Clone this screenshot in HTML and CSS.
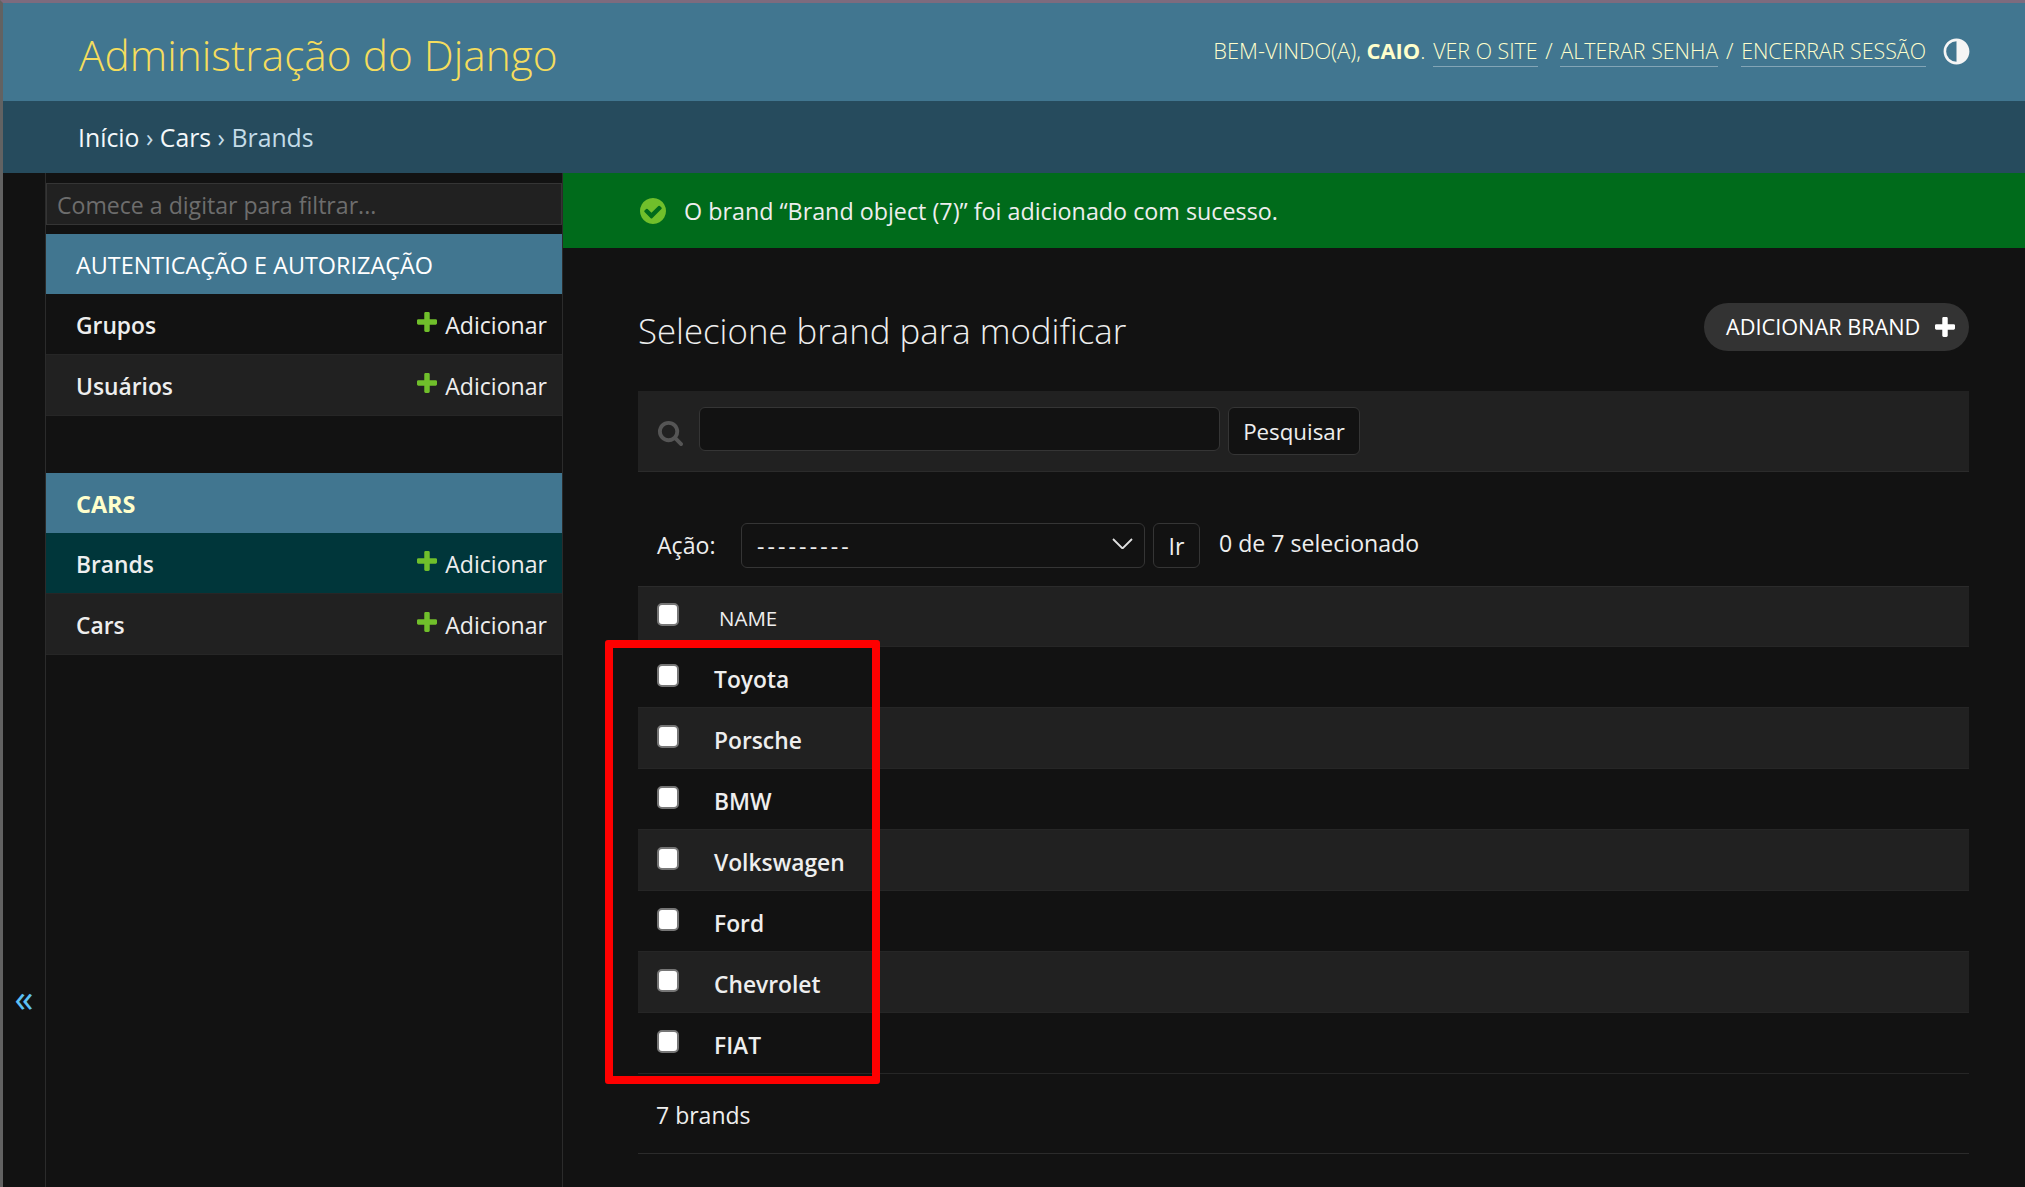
FILE: index.html
```html
<!DOCTYPE html>
<html lang="pt-BR">
<head>
<meta charset="utf-8">
<title>Selecione brand para modificar | Administração do Django</title>
<link rel="stylesheet" href="styles.css">
</head>
<body>
<div class="page">
  <header class="header">
    <h1 class="branding">Administração do Django</h1>
    <div class="tools">
      <div class="user-tools">Bem-vindo(a), <strong>Caio</strong>. <a href="#">Ver o site</a> / <a href="#">Alterar senha</a> / <a href="#">Encerrar sessão</a></div>
      <svg class="theme-icon" viewBox="0 0 24 24" aria-hidden="true"><path fill="currentColor" d="M12 22C6.477 22 2 17.523 2 12S6.477 2 12 2s10 4.477 10 10-4.477 10-10 10zm0-2V4a8 8 0 1 0 0 16z"/></svg>
    </div>
  </header>
  <nav class="breadcrumbs"><a href="#">Início</a> › <a href="#">Cars</a> › Brands</nav>
  <div class="main">
    <div class="toggle-col"><span class="toggle">«</span></div>
    <aside class="sidebar">
      <input class="nav-filter" type="text" placeholder="Comece a digitar para filtrar...">
      <section class="app">
        <div class="caption">Autenticação e Autorização</div>
        <div class="nav-row">
          <a href="#" class="model">Grupos</a>
          <a href="#" class="addlink"><svg class="plus" viewBox="192 192 1408 1408"><path d="M1600 796v192q0 40-28 68t-68 28h-416v416q0 40-28 68t-68 28h-192q-40 0-68-28t-28-68v-416h-416q-40 0-68-28t-28-68v-192q0-40 28-68t68-28h416v-416q0-40 28-68t68-28h192q40 0 68 28t28 68v416h416q40 0 68 28t28 68z"/></svg>Adicionar</a>
        </div>
        <div class="nav-row alt">
          <a href="#" class="model">Usuários</a>
          <a href="#" class="addlink"><svg class="plus" viewBox="192 192 1408 1408"><path d="M1600 796v192q0 40-28 68t-68 28h-416v416q0 40-28 68t-68 28h-192q-40 0-68-28t-28-68v-416h-416q-40 0-68-28t-28-68v-192q0-40 28-68t68-28h416v-416q0-40 28-68t68-28h192q40 0 68 28t28 68v416h416q40 0 68 28t28 68z"/></svg>Adicionar</a>
        </div>
      </section>
      <section class="app app-cars">
        <div class="caption current">Cars</div>
        <div class="nav-row selected">
          <a href="#" class="model">Brands</a>
          <a href="#" class="addlink"><svg class="plus" viewBox="192 192 1408 1408"><path d="M1600 796v192q0 40-28 68t-68 28h-416v416q0 40-28 68t-68 28h-192q-40 0-68-28t-28-68v-416h-416q-40 0-68-28t-28-68v-192q0-40 28-68t68-28h416v-416q0-40 28-68t68-28h192q40 0 68 28t28 68v416h416q40 0 68 28t28 68z"/></svg>Adicionar</a>
        </div>
        <div class="nav-row alt">
          <a href="#" class="model">Cars</a>
          <a href="#" class="addlink"><svg class="plus" viewBox="192 192 1408 1408"><path d="M1600 796v192q0 40-28 68t-68 28h-416v416q0 40-28 68t-68 28h-192q-40 0-68-28t-28-68v-416h-416q-40 0-68-28t-28-68v-192q0-40 28-68t68-28h416v-416q0-40 28-68t68-28h192q40 0 68 28t28 68v416h416q40 0 68 28t28 68z"/></svg>Adicionar</a>
        </div>
      </section>
    </aside>
    <main class="content">
      <div class="message">
        <svg class="yes" viewBox="128 128 1536 1536"><path d="M1412 734q0-28-18-46l-91-90q-19-19-45-19t-45 19l-408 407-226-226q-19-19-45-19t-45 19l-91 90q-18 18-18 46 0 27 18 45l362 362q19 19 45 19 27 0 46-19l543-543q18-18 18-45zm252 162q0 209-103 385.5t-279.500 279.500-385.500 103-385.500-103-279.500-279.500-103-385.500 103-385.500 279.500-279.500 385.500-103 385.500 103 279.500 279.500 103 385.500z"/></svg>
        <span>O brand “Brand object (7)” foi adicionado com sucesso.</span>
      </div>
      <div class="body">
        <div class="title-row">
          <h2 class="title">Selecione brand para modificar</h2>
          <a href="#" class="add-btn">Adicionar brand<svg class="plus-w" viewBox="192 192 1408 1408"><path d="M1600 796v192q0 40-28 68t-68 28h-416v416q0 40-28 68t-68 28h-192q-40 0-68-28t-28-68v-416h-416q-40 0-68-28t-28-68v-192q0-40 28-68t68-28h416v-416q0-40 28-68t68-28h192q40 0 68 28t28 68v416h416q40 0 68 28t28 68z"/></svg></a>
        </div>
        <form class="toolbar">
          <svg class="search-icon" viewBox="0 0 1792 1792"><path d="M1216 832q0-185-131.500-316.500t-316.500-131.500-316.500 131.500-131.500 316.500 131.500 316.500 316.500 131.500 316.500-131.500 131.500-316.500zm512 832q0 52-38 90t-90 38q-54 0-90-38l-343-342q-179 124-399 124-143 0-273.500-55.500t-225-150-150-225-55.500-273.500 55.500-273.500 150-225 225-150 273.500-55.500 273.500 55.500 225 150 150 225 55.500 273.500q0 220-124 399l343 343q37 37 37 90z"/></svg>
          <input class="search-input" type="text">
          <button class="search-btn" type="button">Pesquisar</button>
        </form>
        <div class="actions">
          <span class="action-label">Ação:</span>
          <div class="select"><span class="dashes">---------</span><svg class="chevron" viewBox="0 0 21 11"><path d="M1 1l9.500 9.500L20 1" fill="none" stroke="currentColor" stroke-width="1.800"/></svg></div>
          <button class="go-btn" type="button">Ir</button>
          <span class="counter">0 de 7 selecionado</span>
        </div>
        <div class="result">
          <div class="red-box"></div>
          <div class="row head"><input class="check" type="checkbox"><span class="col-name">Name</span></div>
          <div class="row"><input class="check" type="checkbox"><a href="#" class="name">Toyota</a></div>
          <div class="row alt"><input class="check" type="checkbox"><a href="#" class="name">Porsche</a></div>
          <div class="row"><input class="check" type="checkbox"><a href="#" class="name">BMW</a></div>
          <div class="row alt"><input class="check" type="checkbox"><a href="#" class="name">Volkswagen</a></div>
          <div class="row"><input class="check" type="checkbox"><a href="#" class="name">Ford</a></div>
          <div class="row alt"><input class="check" type="checkbox"><a href="#" class="name">Chevrolet</a></div>
          <div class="row"><input class="check" type="checkbox"><a href="#" class="name">FIAT</a></div>
        </div>
        <p class="paginator">7 brands</p>
      </div>
    </main>
  </div>
</div>
</body>
</html>
```
FILE: styles.css
```css
* { box-sizing: border-box; }
html, body { margin: 0; height: 100%; }
body {
  background: #121212;
  color: #eeeeee;
  font-family: "Open Sans", "Noto Sans", sans-serif;
  font-size: 23.1px;
  overflow: hidden;
}
a { color: inherit; text-decoration: none; }

.page {
  height: 1187px;
  display: flex;
  flex-direction: column;
  border-top: 3px solid #7d6b7e;
  border-left: 3px solid #626262;
}

/* header */
.header {
  height: 98px;
  flex: none;
  background: #417690;
  display: flex;
  align-items: center;
  justify-content: space-between;
  padding: 0 56px 0 76px;
}
.branding {
  margin: 4px 0 0;
  font-size: 42.4px;
  font-weight: 300;
  color: #f5dd5d;
}
.tools { display: flex; align-items: center; gap: 15px; margin-top: -4px; }
.user-tools {
  font-size: 21.9px;
  font-weight: 300;
  color: #ffffcc;
  text-transform: uppercase;
  white-space: nowrap;
}
.user-tools strong { font-weight: 700; }
.user-tools a {
  font-size: 21.4px;
  margin: 0 2px;
  border-bottom: 1px solid rgba(255,255,255,.35);
  padding-bottom: 1px;
}
.user-tools a:last-child { margin-right: 0; }
.theme-icon { width: 31px; height: 31px; color: #f5f5f5; margin-right: -3px; margin-top: 2px; }

.breadcrumbs {
  height: 72px;
  flex: none;
  background: #264b5d;
  color: #c4dce8;
  padding: 1px 0 0 75px;
  font-size: 24.8px;
  line-height: 71px;
}
.breadcrumbs a { color: #f4f8fa; }

/* main */
.main { flex: 1; display: flex; min-height: 0; }
.toggle-col {
  width: 43px;
  flex: none;
  display: flex;
  flex-direction: column;
  justify-content: flex-end;
  align-items: center;
  padding: 0 0 170px 0;
  border-right: 1px solid #2b2b2b;
}
.toggle { color: #5cc0f5; font-size: 38px; line-height: 40px; }

.sidebar {
  width: 517px;
  flex: none;
  border-right: 1px solid #2b2b2b;
  padding-top: 10px;
}
.nav-filter {
  display: block;
  width: 100%;
  height: 42px;
  margin-bottom: 9px;
  background: #212121;
  border: 1px solid #353535;
  color: #eee;
  font: inherit;
  padding: 2px 10px 0;
}
.nav-filter::placeholder { color: #6d6d6d; opacity: 1; }
.app-cars { margin-top: 57px; }
.caption {
  height: 60px;
  background: #417690;
  color: #fff;
  text-transform: uppercase;
  display: flex;
  align-items: center;
  padding: 1px 0 0 30px;
  font-size: 23.4px;
}
.caption.current { font-weight: 700; color: #ffffcc; }
.nav-row {
  height: 61px;
  display: flex;
  align-items: center;
  justify-content: space-between;
  padding: 2px 15px 0 30px;
  border-bottom: 1px solid #262626;
}
.nav-row.alt { background: #212121; }
.nav-row.selected { background: #00363a; }
.model { font-weight: 600; font-size: 22.8px; }
.addlink { display: flex; align-items: center; gap: 8px; }
.plus { width: 20px; height: 20px; fill: #70bf2b; margin-top: -7px; }

/* content */
.content { flex: 1; min-width: 0; display: flex; flex-direction: column; }
.message {
  height: 75px;
  flex: none;
  background: #006b1b;
  display: flex;
  align-items: center;
  gap: 18px;
  padding-left: 77px;
  font-size: 23.3px;
}
.yes { width: 26px; height: 26px; fill: #70bf2b; }
.body { padding: 0 56px 0 75px; }
.title-row {
  display: flex;
  align-items: center;
  justify-content: space-between;
  height: 143px;
  padding-top: 22px;
}
.title { margin: 0; font-size: 34.8px; font-weight: 300; color: #eeeeee; }
.add-btn {
  height: 48px;
  width: 265px;
  border-radius: 24px;
  background: #333333;
  color: #fff;
  display: flex;
  align-items: center;
  justify-content: space-between;
  padding: 0 14px 0 22px;
  text-transform: uppercase;
  font-size: 21.7px;
  margin-top: 3px;
  margin-bottom: 11px;
}
.plus-w { width: 20px; height: 20px; fill: #fff; }
.toolbar {
  height: 81px;
  background: #212121;
  border-bottom: 1px solid #2b2b2b;
  display: flex;
  align-items: flex-start;
  padding: 16px 0 0 19px;
}
.search-icon { width: 27px; height: 27px; fill: #555; margin-top: 12px; margin-right: 15px; flex: none; }
.search-input {
  width: 521px;
  height: 44px;
  background: #121212;
  border: 1px solid #353535;
  border-radius: 6px;
  margin-right: 8px;
}
.search-btn, .go-btn {
  background: #121212;
  border: 1px solid #353535;
  border-radius: 6px;
  color: #eee;
  font: inherit;
  padding: 0;
}
.search-btn { width: 132px; height: 48px; font-size: 22.3px; }

.actions {
  height: 114px;
  display: flex;
  align-items: flex-start;
  padding: 51px 0 0 19px;
}
.action-label { width: 84px; line-height: 45px; }
.select {
  width: 404px;
  height: 45px;
  border: 1px solid #353535;
  border-radius: 6px;
  background: #121212;
  display: flex;
  align-items: center;
  justify-content: space-between;
  padding: 0 11px 0 15px;
}
.dashes { letter-spacing: 3.1px; }
.chevron { width: 21px; height: 11px; color: #e0e0e0; margin-top: -4px; }
.go-btn { width: 47px; height: 45px; margin-left: 8px; }
.counter { margin-left: 19px; line-height: 40px; }

.result { position: relative; }
.red-box {
  position: absolute;
  left: -33px;
  top: 54px;
  width: 275px;
  height: 444px;
  border: 8px solid #ff0000;
  border-radius: 3px;
  pointer-events: none;
  z-index: 1;
}
.row {
  height: 61px;
  display: flex;
  align-items: center;
  padding: 4px 0 0 19px;
  border-bottom: 1px solid #262626;
}
.row.alt, .row.head { background: #212121; }
.row.head { border-top: 1px solid #2b2b2b; padding-top: 2px; }
.row.head .check { margin-top: -6px; }
.check {
  appearance: none;
  width: 22px;
  height: 23px;
  margin: -8px 36px 0 0;
  background: #fff;
  border: 2px solid #767676;
  border-radius: 5px;
  flex: none;
}
.col-name {
  font-size: 20.5px;
  font-weight: 400;
  text-transform: uppercase;
  margin-left: 4px;
}
.name { font-weight: 600; font-size: 22.8px; margin-left: -1px; }
.paginator {
  margin: 0;
  height: 80px;
  padding: 3px 0 0 18px;
  display: flex;
  align-items: center;
  border-bottom: 1px solid #2b2b2b;
  font-size: 23px;
}
```
